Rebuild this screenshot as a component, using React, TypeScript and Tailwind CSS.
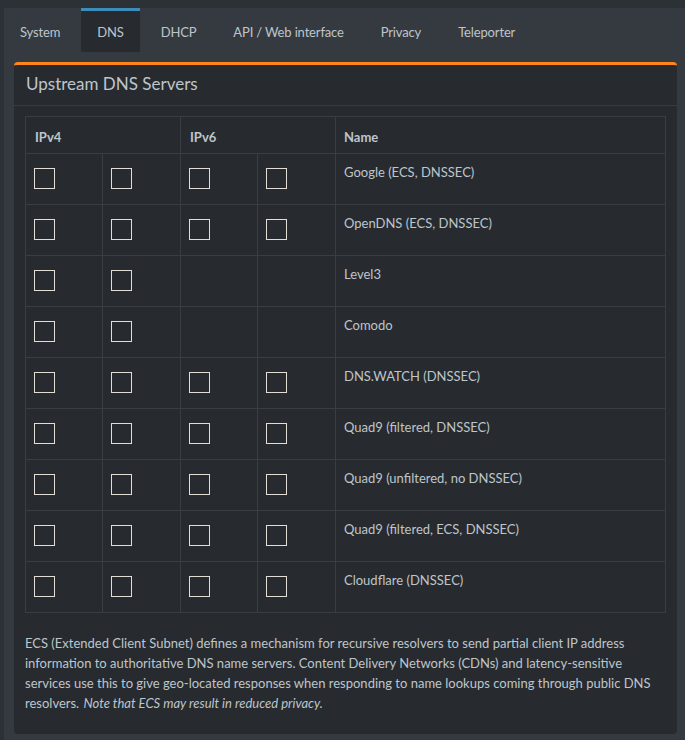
import React from "react";

const rows: { name: string; v6: boolean }[] = [
  { name: "Google (ECS, DNSSEC)", v6: true },
  { name: "OpenDNS (ECS, DNSSEC)", v6: true },
  { name: "Level3", v6: false },
  { name: "Comodo", v6: false },
  { name: "DNS.WATCH (DNSSEC)", v6: true },
  { name: "Quad9 (filtered, DNSSEC)", v6: true },
  { name: "Quad9 (unfiltered, no DNSSEC)", v6: true },
  { name: "Quad9 (filtered, ECS, DNSSEC)", v6: true },
  { name: "Cloudflare (DNSSEC)", v6: true },
];

const tabs = ["System", "DNS", "DHCP", "API / Web interface", "Privacy", "Teleporter"];

function Box() {
  return <div className="mt-[6px] h-[21px] w-[21px] border border-[#e2ddd5]" />;
}

export default function App() {
  return (
    <div
      className="min-h-[740px] w-[685px] bg-[#2c3136] pt-[8px] pl-[4px] text-[#bec5cb]"
      style={{ fontFamily: '"Source Sans Pro", Lato, "Liberation Sans", sans-serif' }}
    >
      <div className="min-h-[732px] bg-[#343a40]">
        <div className="flex h-[44px] gap-[5px]">
          {tabs.map((t) => (
            <div
              key={t}
              className={
                "h-[44px] px-[16px] text-[13px] leading-[20px] tracking-[-0.15px] " +
                (t === "DNS" ? "border-t-[3px] border-[#3c8dbc] bg-[#272b30] pt-[11px]" : "pt-[14px]")
              }
            >
              {t}
            </div>
          ))}
        </div>
        <div className="ml-[10px] mr-[8px] mt-[10px] rounded-[4px] border-t-[3px] border-[#ff851b] bg-[#272b30]">
          <div className="border-b border-[#363b40] px-[12px] pb-[10px] pt-[7px] text-[17px] leading-[23px]">
            Upstream DNS Servers
          </div>
          <div className="px-[11px] pt-[10px] pb-[21px]">
            <table className="w-[641px] border-collapse text-[13px]">
              <colgroup>
                <col className="w-[77px]" />
                <col className="w-[78px]" />
                <col className="w-[77px]" />
                <col className="w-[78px]" />
                <col />
              </colgroup>
              <thead>
                <tr className="h-[37px]">
                  <th colSpan={2} className="border border-[#393e43] px-[9px] pb-[6px] align-bottom text-left font-bold leading-[20px]">
                    IPv4
                  </th>
                  <th colSpan={2} className="border border-[#393e43] px-[9px] pb-[6px] align-bottom text-left font-bold leading-[20px]">
                    IPv6
                  </th>
                  <th className="border border-[#393e43] px-[8px] pb-[6px] align-bottom text-left font-bold leading-[20px]">
                    Name
                  </th>
                </tr>
              </thead>
              <tbody>
                {rows.map((r) => (
                  <tr key={r.name} className="h-[51px]">
                    <td className="border border-[#393e43] px-[8px] pb-[8px] pt-[8px] align-top">
                      <Box />
                    </td>
                    <td className="border border-[#393e43] px-[8px] pb-[8px] pt-[8px] align-top">
                      <Box />
                    </td>
                    <td className="border border-[#393e43] px-[8px] pb-[8px] pt-[8px] align-top">
                      {r.v6 && <Box />}
                    </td>
                    <td className="border border-[#393e43] px-[8px] pb-[8px] pt-[8px] align-top">
                      {r.v6 && <Box />}
                    </td>
                    <td className="border border-[#393e43] px-[8px] pb-[8px] pt-[8px] align-top leading-[20px]">
                      {r.name}
                    </td>
                  </tr>
                ))}
              </tbody>
            </table>
            <p className="mt-[20px] text-[13px] leading-[20px]">
              ECS (Extended Client Subnet) defines a mechanism for recursive resolvers to send partial client IP address
              information to authoritative DNS name servers. Content Delivery Networks (CDNs) and latency-sensitive
              services use this to give geo-located responses when responding to name lookups coming through public DNS
              resolvers.{" "}
              <em className="pl-[1px]">Note that ECS may result in reduced privacy.</em>
            </p>
          </div>
        </div>
      </div>
    </div>
  );
}
